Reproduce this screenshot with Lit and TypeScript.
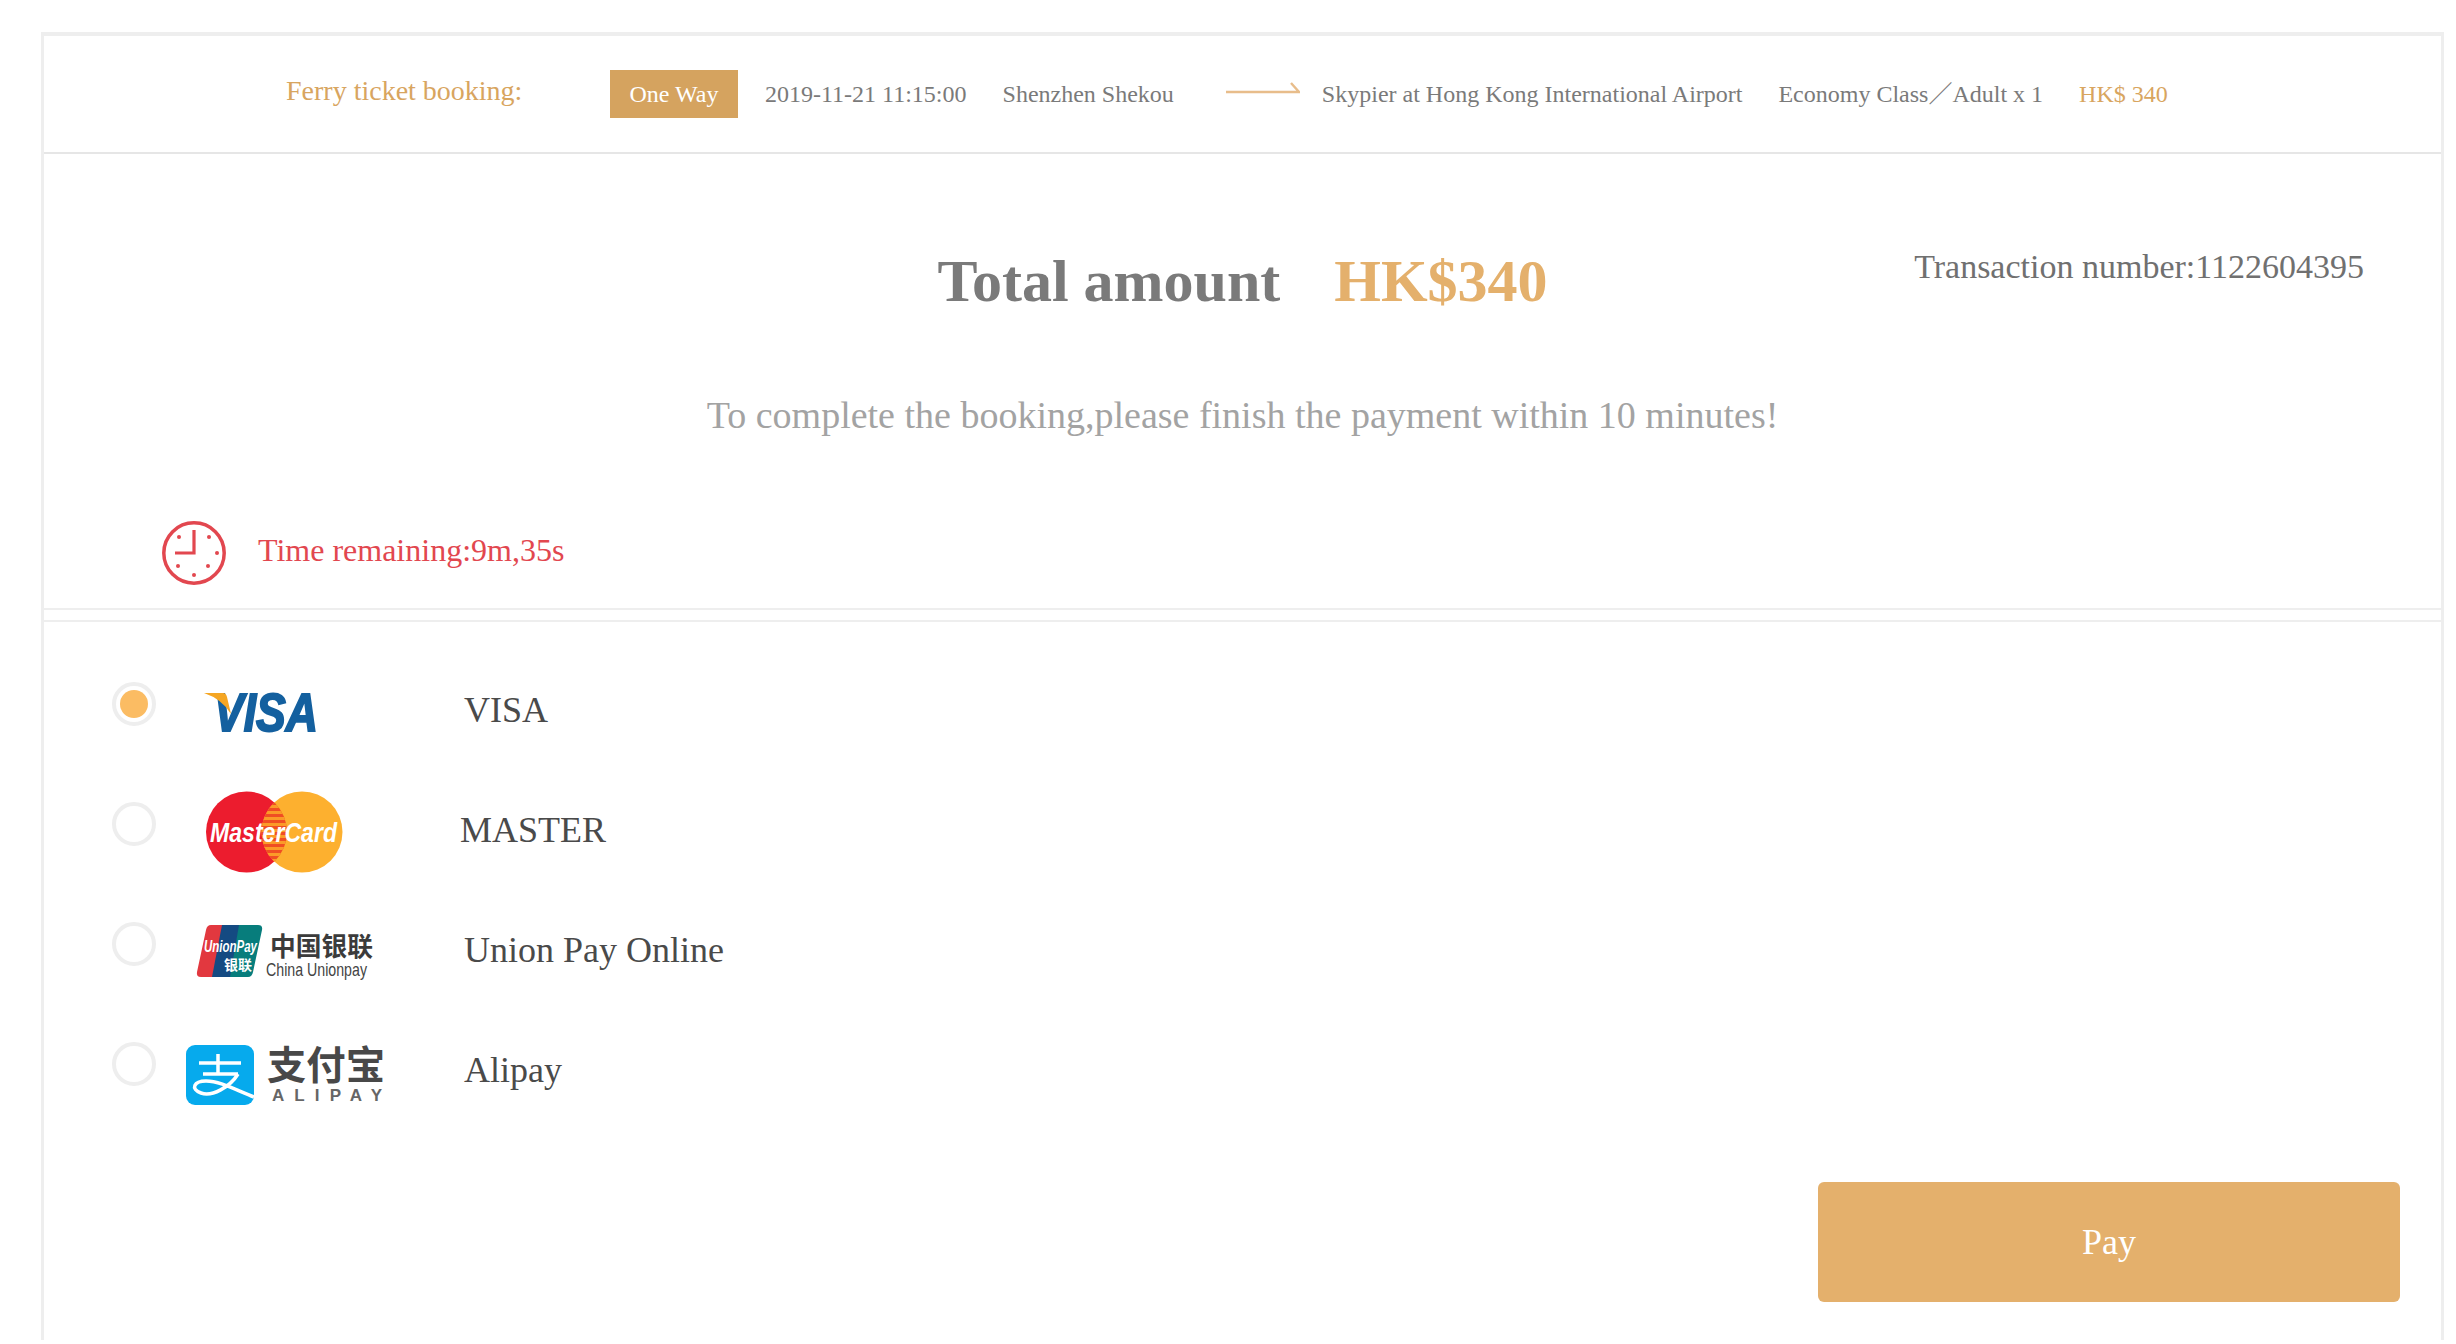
import { LitElement, html, css, svg } from "lit";
import { customElement } from "lit/decorators.js";

const visa = svg`<svg width="116" height="40" viewBox="0 0 116 40">
  <text x="10" y="38" font-family="Liberation Sans" font-weight="700" font-style="italic" font-size="53" textLength="104" lengthAdjust="spacingAndGlyphs" stroke="#14609f" stroke-width="2" fill="#14609f">VISA</text>
  <path d="M0 0 H19 Q22 0 23 4 L27 21 Q18 6 0 0Z" fill="#f5a623"/>
</svg>`;

const master = svg`<svg width="138" height="84" viewBox="0 0 138 84">
  <defs>
    <clipPath id="mc"><circle cx="40.5" cy="41" r="40.5"/></clipPath>
    <clipPath id="mo"><circle cx="96" cy="41" r="40.5"/></clipPath>
  </defs>
  <circle cx="40.5" cy="41" r="40.5" fill="#ec1c2e"/>
  <circle cx="96" cy="41" r="40.5" fill="#fdb02f"/>
  <g clip-path="url(#mc)"><g clip-path="url(#mo)">
    <rect x="50" y="0" width="40" height="84" fill="#f04e23"/>
    ${[8, 14, 20, 26, 32, 38, 44, 50, 56, 62, 68, 74].map((y) => svg`<rect x="50" y="${y}" width="40" height="3" fill="#fb9a28"/>`)}
  </g></g>
  <text x="4" y="51" font-family="Liberation Sans" font-weight="700" font-style="italic" font-size="27" textLength="127" lengthAdjust="spacingAndGlyphs" fill="#fff">MasterCard</text>
</svg>`;

const union = svg`<svg width="180" height="60" viewBox="0 0 180 60">
  <path d="M14 0 H30 L18 52 H4 Q-1 52 0 47 L9 5 Q10 0 14 0Z" fill="#e2383f"/>
  <path d="M25 0 H47 L36 52 H15Z" fill="#144a82"/>
  <path d="M42 0 H61 Q66 0 65 5 L56 47 Q55 52 51 52 H33Z" fill="#077d7c"/>
  <text x="7" y="27" font-family="Liberation Sans" font-weight="700" font-style="italic" font-size="16" textLength="53" lengthAdjust="spacingAndGlyphs" fill="#fff">UnionPay</text>
  <text x="27" y="45" font-family="Noto Sans CJK SC" font-weight="700" font-size="14" fill="#fff">银联</text>
  <text x="73" y="31" font-family="Noto Sans CJK SC" font-weight="700" font-size="26" textLength="103" lengthAdjust="spacingAndGlyphs" fill="#3b3b3b">中国银联</text>
  <text x="69" y="51" font-family="Liberation Sans" font-size="19" textLength="101" lengthAdjust="spacingAndGlyphs" fill="#444">China Unionpay</text>
</svg>`;

const alipay = svg`<svg width="200" height="62" viewBox="0 0 200 62">
  <rect x="0" y="2" width="68" height="60" rx="9" fill="#06aaed"/>
  <g fill="none" stroke="#fff" stroke-width="3.5">
    <path d="M13 20 H55 M32 11 V32 M17 31 H52"/>
    <path d="M52 31 C44 44 26 54 15 50 C4 46 8 38 20 38 C34 38 50 47 68 54"/>
  </g>
  <text x="81" y="36" font-family="Noto Sans CJK SC" font-weight="700" font-size="39" textLength="118" lengthAdjust="spacingAndGlyphs" fill="#484848">支付宝</text>
  <text x="86" y="58" font-family="Liberation Sans" font-weight="700" font-size="17" textLength="110" lengthAdjust="spacing" fill="#666">ALIPAY</text>
</svg>`;

const clock = svg`<svg width="64" height="64" viewBox="0 0 64 64" fill="none" stroke="#e2474f">
  <circle cx="32" cy="32" r="30.2" stroke-width="3.5"/>
  <path d="M32 9 V32 H13" stroke-width="3.2"/>
  <g fill="#e2474f" stroke="none">
    <circle cx="17" cy="16" r="2"/><circle cx="47" cy="16" r="2"/><circle cx="55" cy="32" r="2"/>
    <circle cx="16" cy="45" r="2"/><circle cx="46" cy="45" r="2"/><circle cx="32" cy="54" r="2"/>
  </g>
</svg>`;

interface Method { label: string; logo: unknown; on?: boolean; cls: string; }
const methods: Method[] = [
  { label: "VISA", logo: visa, on: true, cls: "m-visa" },
  { label: "MASTER", logo: master, cls: "m-master" },
  { label: "Union Pay Online", logo: union, cls: "m-union" },
  { label: "Alipay", logo: alipay, cls: "m-ali" },
];

@customElement("app-root")
export class AppRoot extends LitElement {
  static styles = css`
    :host { display: block; font-family: "Liberation Serif", "Noto Sans CJK SC", serif; background: #fff; height: 1344px; overflow: hidden; }
    .frame { margin: 32px 12px 0 41px; border: solid #eee; border-width: 4px 3px 0 3px; height: 1308px; box-sizing: border-box; }
    .bar { height: 116px; border-bottom: 2px solid #e6e6e6; display: flex; align-items: center; font-size: 24px; line-height: 28px; color: #7a7a7a; white-space: nowrap; }
    .ferry { margin: 0 0 6px 242px; width: 324px; font-size: 28px; color: #d8a55f; }
    .badge { background: #d5a35f; color: #fff; width: 128px; height: 48px; display: flex; align-items: center; justify-content: center; margin-right: 27px; }
    .date { margin-right: 36px; }
    .from { margin-right: 52px; }
    .arrow { display: block; margin: 0 22px 12px 0; }
    .to { margin-right: 36px; }
    .cls { margin-right: 36px; }
    .price { color: #d8a55f; }
    .summary { height: 456px; border-bottom: 2px solid #eee; box-sizing: border-box; position: relative; }
    .total { display: flex; justify-content: center; gap: 54px; padding-top: 92px; font-size: 60px; font-weight: 700; line-height: 70px; color: #7a7a7a; margin: 0; }
    .total b { color: #e4b06c; }
    .txn { position: absolute; right: 77px; top: 93px; font-size: 34px; line-height: 40px; color: #707070; }
    .hint { margin: 78px 0 0; text-align: center; font-size: 38px; line-height: 42px; color: #a3a3a3; }
    .time { display: flex; align-items: center; gap: 32px; margin: 85px 0 0 118px; font-size: 32px; color: #e2474f; }
    .time svg { display: block; }
    .time span { padding-bottom: 6px; }
    .methods { margin-top: 10px; border-top: 2px solid #eee; padding-top: 28px; height: 680px; box-sizing: border-box; }
    .row { display: flex; align-items: center; height: 120px; font-size: 36px; color: #4a4a4a; }
    .radio { width: 44px; height: 44px; border: 4px solid #eee; border-radius: 50%; box-sizing: border-box; margin: 0 0 0 68px; display: flex; align-items: center; justify-content: center; flex: none; transform: translateY(-6px); }
    .radio i { width: 28px; height: 28px; border-radius: 50%; background: #fbbc63; }
    .logo-box { width: 308px; flex: none; display: flex; box-sizing: border-box; }
    .logo-box svg { display: block; overflow: visible; }
    .m-visa .logo-box { padding: 6px 0 0 48px; }
    .m-master .logo-box { padding: 6px 0 0 50px; width: 304px; }
    .m-union .logo-box { padding: 10px 0 0 41px; }
    .m-ali .logo-box { padding: 8px 0 0 30px; }
    .actions { display: flex; justify-content: flex-end; padding: 52px 41px 0 0; }
    .pay { width: 582px; height: 120px; border: 0; border-radius: 6px; background: #e4b06c; color: #fff; font: 36px "Liberation Serif", serif; }
  `;

  render() {
    return html`<div class="frame">
      <div class="bar">
        <span class="ferry">Ferry ticket booking:</span>
        <span class="badge">One Way</span>
        <span class="date">2019-11-21 11:15:00</span>
        <span class="from">Shenzhen Shekou</span>
        <svg class="arrow" width="74" height="12" viewBox="0 0 74 12" fill="none" stroke="#e8bd8b" stroke-width="2.4"><path d="M0 10 H73 L65 1"/></svg>
        <span class="to">Skypier at Hong Kong International Airport</span>
        <span class="cls">Economy Class／Adult x 1</span>
        <span class="price">HK$ 340</span>
      </div>
      <div class="summary">
        <h1 class="total"><span>Total amount</span><b>HK$340</b></h1>
        <div class="txn">Transaction number:1122604395</div>
        <p class="hint">To complete the booking,please finish the payment within 10 minutes!</p>
        <div class="time">${clock}<span>Time remaining:9m,35s</span></div>
      </div>
      <div class="methods">
        ${methods.map(
          (m) => html`<div class="row ${m.cls}">
            <span class="radio">${m.on ? html`<i></i>` : ""}</span>
            <span class="logo-box">${m.logo}</span>
            <span>${m.label}</span>
          </div>`
        )}
        <div class="actions"><button class="pay">Pay</button></div>
      </div>
    </div>`;
  }
}
